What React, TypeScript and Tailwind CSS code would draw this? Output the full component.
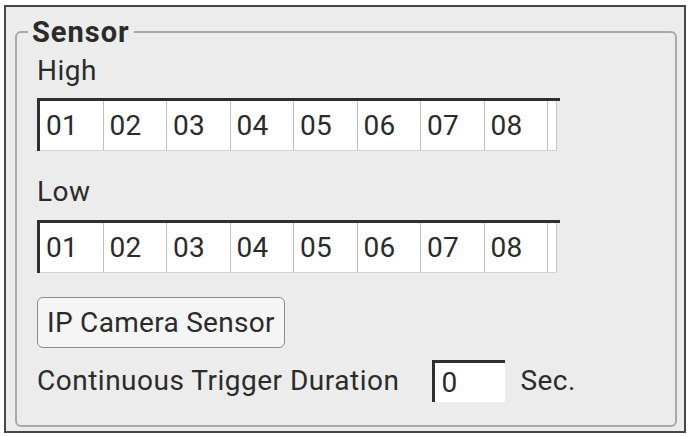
import React from "react";

const font = { fontFamily: "Roboto, 'Noto Sans', sans-serif" };

const channels = ["01", "02", "03", "04", "05", "06", "07", "08", ""];

function ChannelRow() {
  return (
    <div className="w-[523px] border-t-[3px] border-l-[3px] border-[#2f2f2f] pr-[3px]">
      <div className="flex h-[50px] overflow-hidden border-b border-[#d4d4d4]">
        {channels.map((c, i) => (
          <div
            key={i}
            className={
              i === channels.length - 1
                ? "w-[9px] shrink-0 bg-white border-r border-[#c4c4c4]"
                : "w-[63.5px] shrink-0 bg-white border-r border-[#bdbdbd] flex items-center pl-[6px] text-[28px] leading-none tracking-[0.3px] text-[#2b2b2b]"
            }
          >
            {c}
          </div>
        ))}
      </div>
    </div>
  );
}

export default function App() {
  return (
    <div className="w-[690px] h-[437px] bg-white pt-[5px] pl-[4px]" style={font}>
      <div className="w-[682px] h-[428px] border-2 border-[#474747] bg-[#ececec] pl-[9px] pt-[8px]">
        <fieldset className="w-[662px] h-[412px] border-2 border-[#a9a9a9] rounded-[6px] p-0 m-0">
          <legend className="ml-[11px] px-[4px] text-[29px] font-bold leading-[34px] tracking-[1px] text-[#2a2a2a]">
            Sensor
          </legend>
          <div className="pl-[20px] text-[#2b2b2b] tracking-[0.5px]">
            <div className="mt-[6px] text-[28px] leading-[32px]">High</div>
            <div className="mt-[11px]">
              <ChannelRow />
            </div>
            <div className="mt-[25px] text-[28px] leading-[32px]">Low</div>
            <div className="mt-[12px]">
              <ChannelRow />
            </div>
            <button className="mt-[24px] w-[248px] h-[51px] rounded-[6px] border-[1.5px] border-[#8c8c8c] bg-[#f5f5f5] text-left pl-[9px] text-[28px] leading-none tracking-[0.3px] text-[#2b2b2b]">
              IP Camera Sensor
            </button>
            <div className="mt-[12px] flex items-center text-[28px] leading-[32px]">
              <span>Continuous Trigger Duration</span>
              <div className="ml-[33px] w-[73px] h-[42px] bg-white border-t-[3px] border-l-[3px] border-[#2f2f2f] flex items-center pl-[6px] text-[28px] leading-none">
                0
              </div>
              <span className="ml-[15px]">Sec.</span>
            </div>
          </div>
        </fieldset>
      </div>
    </div>
  );
}
